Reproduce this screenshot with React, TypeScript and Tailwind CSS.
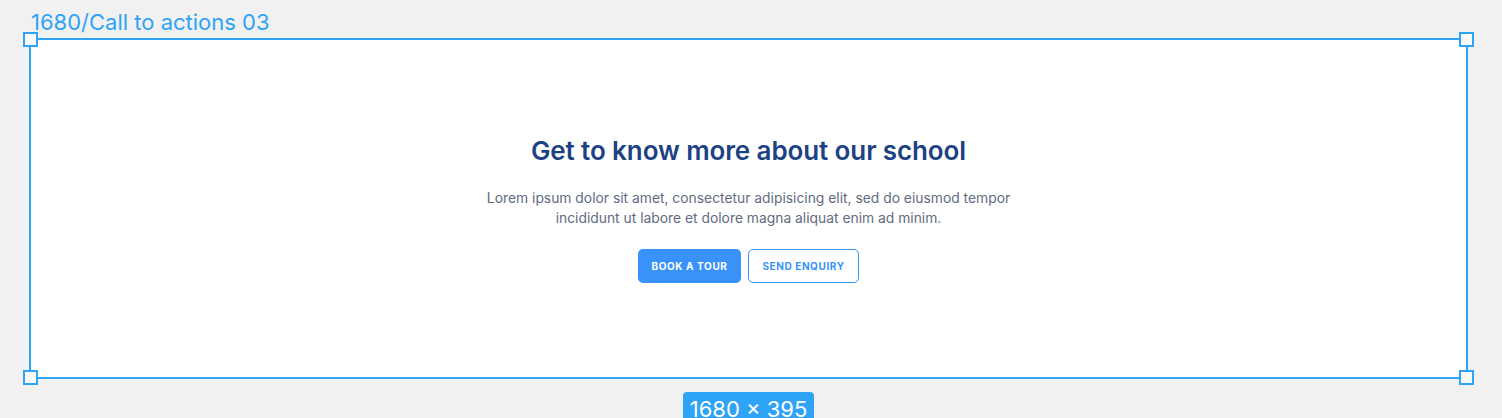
import React from "react";

const handle = "absolute w-[15px] h-[15px] bg-[#fbfbfb] border-2 border-[#2fa3f6]";

export default function App() {
  return (
    <div className="w-[1502px] h-[418px] overflow-hidden bg-[#f1f1f1] font-['Inter',sans-serif] flex flex-col pl-[29px] pt-[7px]">
      <div className="shrink-0 ml-[2px] h-[31px] text-[22px] leading-[30px] text-[#2fa3f6]">
        1680/Call to actions 03
      </div>

      {/* frame */}
      <div className="relative shrink-0 w-[1439px] h-[341px] border-2 border-[#2fa3f6] bg-white">
        <div className="flex flex-col items-center pt-[94px]">
          <h2 className="text-[26px] leading-[34px] font-semibold text-[#1d4284] tracking-[-0.1px]">
            Get to know more about our school
          </h2>
          <p className="mt-[20px] text-[13.85px] leading-[20px] text-[#636b82] text-center">
            Lorem ipsum dolor sit amet, consectetur adipisicing elit, sed do eiusmod tempor
            <br />
            incididunt ut labore et dolore magna aliquat enim ad minim.
          </p>
          <div className="mt-[21px] flex gap-[7px]">
            <button className="h-[34px] w-[103px] rounded-[5px] bg-[#3892f7] text-white text-[10px] font-bold tracking-[0.6px]">
              BOOK A TOUR
            </button>
            <button className="h-[34px] w-[111px] rounded-[5px] border border-[#3892f7] bg-white text-[#3892f7] text-[10px] font-bold tracking-[0.6px]">
              SEND ENQUIRY
            </button>
          </div>
        </div>

        <div className={`${handle} -left-[8px] -top-[8px]`} />
        <div className={`${handle} -right-[8px] -top-[8px]`} />
        <div className={`${handle} -left-[8px] -bottom-[8px]`} />
        <div className={`${handle} -right-[8px] -bottom-[8px]`} />
      </div>

      <div className="shrink-0 w-[1439px] flex justify-center pt-[13px]">
        <div className="h-[34px] px-[7px] rounded-[4px] bg-[#2fa3f6] pt-[2px] text-[22px] leading-[30px] text-white">
          1680 × 395
        </div>
      </div>
    </div>
  );
}
